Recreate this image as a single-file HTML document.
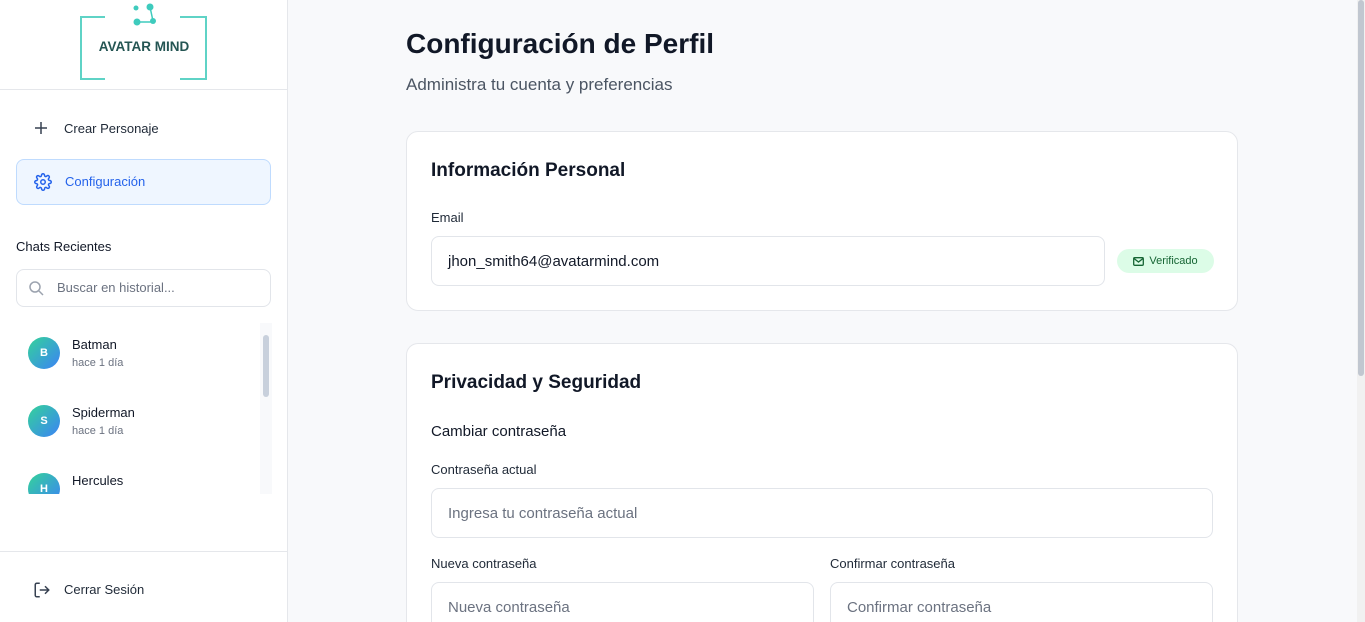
<!DOCTYPE html>
<html style="width:1365px;height:622px;overflow:hidden"><head><meta charset="utf-8"><style>
*{box-sizing:border-box;margin:0;padding:0}
body{width:1365px;height:622px;overflow:hidden;font-family:"Liberation Sans",sans-serif;background:#f8f9fb;position:relative;color:#111827}
.sb{position:absolute;left:0;top:0;width:288px;height:622px;background:#fff;border-right:1px solid #e5e7eb}
.abs{position:absolute}
.t{font-size:13px;color:#1f2937}
.card{position:absolute;left:406px;width:832px;background:#fff;border:1px solid #e5e7eb;border-radius:12px}
.inp{position:absolute;border:1px solid #e2e5ea;border-radius:8px;background:#fff;font-size:15px;color:#6b7280;padding-left:16px;display:flex;align-items:center}
.lbl{position:absolute;font-size:13px;color:#1f2937}
.av{position:absolute;left:28px;width:32px;height:32px;border-radius:50%;background:linear-gradient(135deg,#34d399,#3b82f6);color:#fff;font-size:11px;font-weight:bold;display:flex;align-items:center;justify-content:center}
.nm{position:absolute;left:72px;font-size:13px;color:#111827}
.tm{position:absolute;left:72px;font-size:11px;color:#6b7280}
</style></head><body>
<div class="sb">
 <svg class="abs" style="left:78px;top:0" width="132" height="84">
  <path d="M27 17H3V79H27M102 17H128V79H102" fill="none" stroke="#5fd3c6" stroke-width="2"/>
  <g fill="#3ecbbd"><circle cx="58" cy="8" r="2.5"/><circle cx="72" cy="7" r="3.5"/><circle cx="59" cy="22" r="3.5"/><circle cx="75" cy="21" r="3"/></g>
  <path d="M72 7L75 21M59 22H75" fill="none" stroke="#3ecbbd" stroke-width="1.5"/>
  <text x="66" y="51" text-anchor="middle" font-family="Liberation Sans" font-weight="bold" font-size="13.5" fill="#245553">AVATAR MIND</text>
 </svg>
 <div class="abs" style="left:0;top:89px;width:288px;border-top:1px solid #e5e7eb"></div>
 <svg class="abs" style="left:34px;top:121px" width="14" height="14"><path d="M7 1V13M1 7H13" stroke="#374151" stroke-width="1.5"/></svg>
 <div class="abs t" style="left:64px;top:121px">Crear Personaje</div>
 <div class="abs" style="left:16px;top:159px;width:255px;height:46px;background:#eff6ff;border:1px solid #bfdbfe;border-radius:8px"></div>
 <svg class="abs" style="left:34px;top:173px" width="18" height="18" viewBox="0 0 24 24" fill="none" stroke="#2563eb" stroke-width="2"><circle cx="12" cy="12" r="3"/><path d="M19.4 15a1.7 1.7 0 0 0 .3 1.8l.1.1a2 2 0 1 1-2.8 2.8l-.1-.1a1.7 1.7 0 0 0-1.8-.3 1.7 1.7 0 0 0-1 1.5V21a2 2 0 1 1-4 0v-.1a1.7 1.7 0 0 0-1.1-1.5 1.7 1.7 0 0 0-1.8.3l-.1.1a2 2 0 1 1-2.8-2.8l.1-.1a1.7 1.7 0 0 0 .3-1.8 1.7 1.7 0 0 0-1.5-1H3a2 2 0 1 1 0-4h.1a1.7 1.7 0 0 0 1.5-1.1 1.7 1.7 0 0 0-.3-1.8l-.1-.1a2 2 0 1 1 2.8-2.8l.1.1a1.7 1.7 0 0 0 1.8.3H9a1.7 1.7 0 0 0 1-1.5V3a2 2 0 1 1 4 0v.1a1.7 1.7 0 0 0 1 1.5 1.7 1.7 0 0 0 1.8-.3l.1-.1a2 2 0 1 1 2.8 2.8l-.1.1a1.7 1.7 0 0 0-.3 1.8V9a1.7 1.7 0 0 0 1.5 1H21a2 2 0 1 1 0 4h-.1a1.7 1.7 0 0 0-1.5 1z"/></svg>
 <div class="abs" style="left:65px;top:174px;font-size:13px;color:#2563eb">Configuración</div>
 <div class="abs t" style="left:16px;top:239px;color:#111827">Chats Recientes</div>
 <div class="abs" style="left:16px;top:269px;width:255px;height:38px;border:1px solid #e2e5ea;border-radius:8px"></div>
 <svg class="abs" style="left:29px;top:281px" width="15" height="15" fill="none" stroke="#9ca3af" stroke-width="1.5"><circle cx="6" cy="6" r="5"/><path d="M10 10L14 14"/></svg>
 <div class="abs" style="left:57px;top:280px;font-size:13px;color:#6b7280">Buscar en historial...</div>
 <div class="abs" style="left:0;top:322px;width:288px;height:172px;overflow:hidden">
  <div class="av" style="top:15px">B</div><div class="nm" style="top:15px">Batman</div><div class="tm" style="top:35px">hace 1 día</div>
  <div class="av" style="top:83px">S</div><div class="nm" style="top:83px">Spiderman</div><div class="tm" style="top:103px">hace 1 día</div>
  <div class="av" style="top:151px">H</div><div class="nm" style="top:151px">Hercules</div>
 </div>
 <div class="abs" style="left:260px;top:323px;width:12px;height:171px;background:#f8f9fb"></div>
 <div class="abs" style="left:263px;top:335px;width:6px;height:62px;background:#c8d0dc;border-radius:3px"></div>
 <div class="abs" style="left:0;top:551px;width:288px;border-top:1px solid #e5e7eb"></div>
 <svg class="abs" style="left:33px;top:581px" width="18" height="18" viewBox="0 0 24 24" fill="none" stroke="#374151" stroke-width="2"><path d="M9 21H5a2 2 0 0 1-2-2V5a2 2 0 0 1 2-2h4M16 17l5-5-5-5M21 12H9"/></svg>
 <div class="abs t" style="left:64px;top:582px">Cerrar Sesión</div>
</div>
<div class="abs" style="left:406px;top:28px;font-size:28px;font-weight:bold;color:#111827">Configuración de Perfil</div>
<div class="abs" style="left:406px;top:75px;font-size:17px;color:#4b5563">Administra tu cuenta y preferencias</div>
<div class="card" style="top:131px;height:180px">
 <div class="abs" style="left:24px;top:28px;font-size:19px;font-weight:bold">Información Personal</div>
 <div class="lbl" style="left:24px;top:78px">Email</div>
 <div class="inp" style="left:24px;top:104px;width:674px;height:50px;color:#111827">jhon_smith64@avatarmind.com</div>
 <div class="abs" style="left:710px;top:117px;width:97px;height:24px;border-radius:12px;background:#dcfce7;color:#166534;font-size:11px;display:flex;align-items:center;justify-content:center;gap:5px"><svg width="11" height="9" fill="none" stroke="#166534" stroke-width="1.3"><rect x=".7" y=".7" width="9.6" height="7.6" rx="1"/><path d="M1 1.5L5.5 5L10 1.5"/></svg>Verificado</div>
</div>
<div class="card" style="top:343px;height:279px;border-bottom:none;border-radius:12px 12px 0 0">
 <div class="abs" style="left:24px;top:28px;font-size:19px;font-weight:bold">Privacidad y Seguridad</div>
 <div class="abs" style="left:24px;top:79px;font-size:15px;color:#111827">Cambiar contraseña</div>
 <div class="lbl" style="left:24px;top:118px">Contraseña actual</div>
 <div class="inp" style="left:24px;top:144px;width:782px;height:50px">Ingresa tu contraseña actual</div>
 <div class="lbl" style="left:24px;top:212px">Nueva contraseña</div>
 <div class="inp" style="left:24px;top:238px;width:383px;height:50px">Nueva contraseña</div>
 <div class="lbl" style="left:423px;top:212px">Confirmar contraseña</div>
 <div class="inp" style="left:423px;top:238px;width:383px;height:50px">Confirmar contraseña</div>
</div>
<div class="abs" style="left:1357px;top:0;width:8px;height:622px;background:#f1f1f1"></div>
<div class="abs" style="left:1358px;top:0;width:6px;height:376px;background:#c1c7d0;border-radius:3px"></div>
</body></html>
